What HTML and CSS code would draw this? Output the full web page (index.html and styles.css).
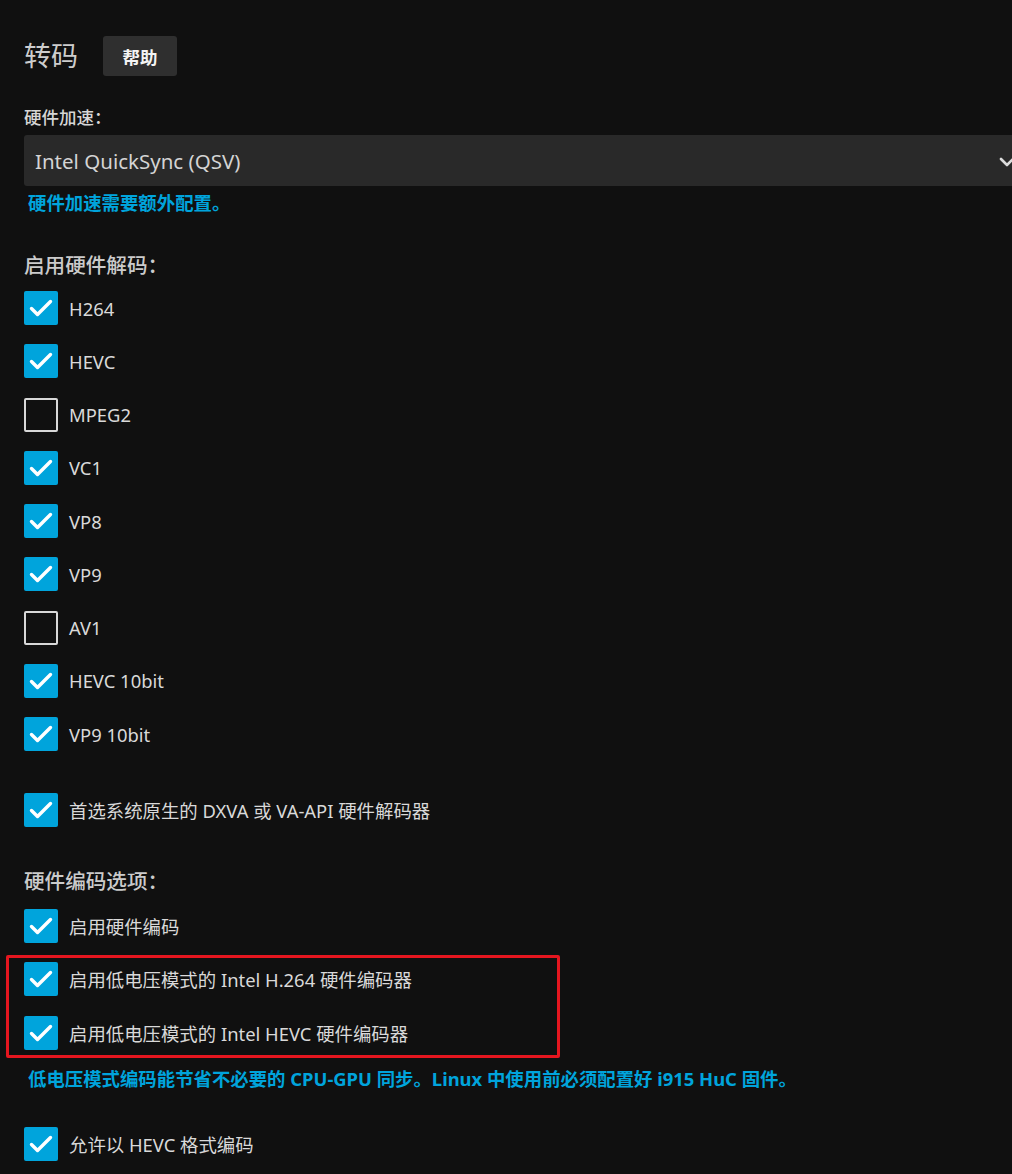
FILE: index.html
```html
<!DOCTYPE html>
<html lang="zh-CN">
<head>
    <meta charset="UTF-8">
    <title>转码</title>
    <link rel="stylesheet" href="styles.css">
</head>
<body>
    <div class="page">
        <div class="section-header">
            <h2 class="section-title">转码</h2>
            <button class="help-button">帮助</button>
        </div>

        <div class="select-container">
            <label class="select-label">硬件加速：</label>
            <div class="select">
                <span class="select-value">Intel QuickSync (QSV)</span>
                <svg class="select-arrow" width="16" height="10" viewBox="0 0 16 10">
                    <polyline points="2,2 8,8 14,2" fill="none" stroke="#dcdcdc" stroke-width="2.6" stroke-linecap="round" stroke-linejoin="round"/>
                </svg>
            </div>
            <div class="field-description">硬件加速需要额外配置。</div>
        </div>

        <h3 class="checkbox-list-title">启用硬件解码：</h3>
        <div class="checkbox-list">
            <label class="checkbox-row"><span class="checkbox is-checked"></span><span class="checkbox-label">H264</span></label>
            <label class="checkbox-row"><span class="checkbox is-checked"></span><span class="checkbox-label">HEVC</span></label>
            <label class="checkbox-row"><span class="checkbox"></span><span class="checkbox-label">MPEG2</span></label>
            <label class="checkbox-row"><span class="checkbox is-checked"></span><span class="checkbox-label">VC1</span></label>
            <label class="checkbox-row"><span class="checkbox is-checked"></span><span class="checkbox-label">VP8</span></label>
            <label class="checkbox-row"><span class="checkbox is-checked"></span><span class="checkbox-label">VP9</span></label>
            <label class="checkbox-row"><span class="checkbox"></span><span class="checkbox-label">AV1</span></label>
            <label class="checkbox-row"><span class="checkbox is-checked"></span><span class="checkbox-label">HEVC 10bit</span></label>
            <label class="checkbox-row"><span class="checkbox is-checked"></span><span class="checkbox-label">VP9 10bit</span></label>
        </div>

        <label class="checkbox-row standalone"><span class="checkbox is-checked"></span><span class="checkbox-label">首选系统原生的 DXVA 或 VA-API 硬件解码器</span></label>

        <h3 class="checkbox-list-title second">硬件编码选项：</h3>
        <div class="checkbox-list">
            <label class="checkbox-row"><span class="checkbox is-checked"></span><span class="checkbox-label">启用硬件编码</span></label>
            <div class="highlight">
                <label class="checkbox-row"><span class="checkbox is-checked"></span><span class="checkbox-label">启用低电压模式的 Intel H.264 硬件编码器</span></label>
                <label class="checkbox-row"><span class="checkbox is-checked"></span><span class="checkbox-label">启用低电压模式的 Intel HEVC 硬件编码器</span></label>
            </div>
        </div>
        <div class="field-description low-power">低电压模式编码能节省不必要的 CPU-GPU 同步。Linux 中使用前必须配置好 i915 HuC 固件。</div>

        <label class="checkbox-row standalone last"><span class="checkbox is-checked"></span><span class="checkbox-label">允许以 HEVC 格式编码</span></label>
    </div>
</body>
</html>
```

FILE: styles.css
```css
/* Dashboard - transcoding page */
html, body {
    margin: 0;
    padding: 0;
    background: #101010;
    overflow: hidden;
}

body {
    font-family: "Noto Sans", "Noto Sans CJK SC", sans-serif;
    color: #d9d9d9;
    font-size: 18.4px;
}

.page {
    padding: 36px 0 0 24px;
}

/* Header */
.section-header {
    display: flex;
    align-items: center;
    height: 40px;
}

.section-title {
    margin: 0;
    font-size: 27px;
    font-weight: 400;
    color: #cdcdcd;
    line-height: 40px;
}

.help-button {
    margin-left: 25px;
    width: 74px;
    height: 40px;
    border: 0;
    border-radius: 3px;
    background: #2f2f2f;
    color: #f4f4f4;
    font-family: inherit;
    font-size: 17.5px;
    font-weight: 700;
    padding: 0;
}

/* Select */
.select-container {
    margin-top: 29px;
}

.select-label {
    display: block;
    line-height: 24px;
    font-size: 17.5px;
    font-weight: 500;
    color: #d6d6d6;
}

.select {
    margin-top: 6px;
    width: 1006px;
    height: 51px;
    box-sizing: border-box;
    padding: 0 15px 0 11px;
    background: #292929;
    border-radius: 3px;
    display: flex;
    align-items: center;
    justify-content: space-between;
}

.select-value {
    font-size: 20.5px;
    color: #d4d4d4;
}

.select-arrow {
    display: block;
    margin-top: 2px;
}

.field-description {
    margin-top: 5px;
    padding-left: 4px;
    line-height: 24px;
    font-size: 18.4px;
    font-weight: 700;
    color: #00a4dc;
}

/* Checkbox lists */
.checkbox-list-title {
    margin: 36px 0 12px;
    font-size: 20.6px;
    font-weight: 500;
    line-height: 28px;
    color: #cbcbcb;
}

.checkbox-list-title.second {
    margin-top: 40px;
    margin-bottom: 14px;
}

.checkbox-list {
    display: flex;
    flex-direction: column;
    gap: 19.25px;
}

.checkbox-row {
    display: flex;
    align-items: center;
    height: 34px;
}

.checkbox-row.standalone {
    margin-top: 42px;
}

.checkbox-row.last {
    margin-top: 36px;
}

.checkbox {
    width: 34px;
    height: 34px;
    box-sizing: border-box;
    border: 2px solid #d8d8d8;
    border-radius: 2px;
    flex-shrink: 0;
}

.checkbox.is-checked {
    border: 0;
    background-color: #00a4dc;
    background-image: url("data:image/svg+xml,%3Csvg xmlns='http://www.w3.org/2000/svg' viewBox='0 0 34 34'%3E%3Cpolyline points='7.5,17.5 13.5,23.5 26.5,10.5' fill='none' stroke='white' stroke-width='3.4' stroke-linecap='round' stroke-linejoin='round'/%3E%3C/svg%3E");
    background-size: 34px 34px;
}

.checkbox-label {
    margin-left: 11px;
    color: #d9d9d9;
}

/* Annotation box */
.highlight {
    position: relative;
    display: flex;
    flex-direction: column;
    gap: 19.25px;
}

.highlight::after {
    content: "";
    position: absolute;
    left: -18px;
    top: -7px;
    width: 554px;
    height: 103px;
    box-sizing: border-box;
    border: 3px solid #e5161f;
    border-radius: 2px;
}

.field-description.low-power {
    margin-top: 17px;
}
```
